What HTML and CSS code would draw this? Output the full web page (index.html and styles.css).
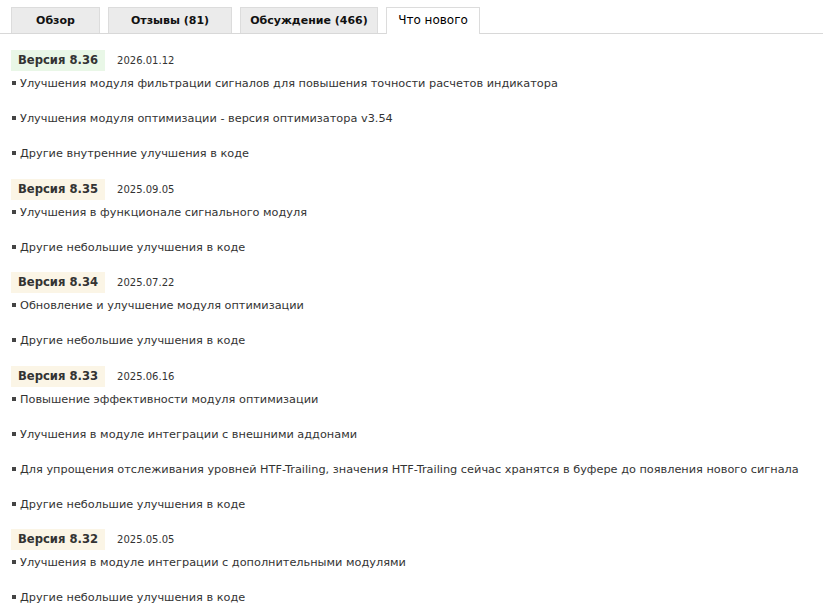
FILE: index.html
```html
<!DOCTYPE html>
<html lang="ru">

<head>
    <meta charset="UTF-8">
    <meta name="viewport" content="width=device-width, initial-scale=1.0">
    <title>Что нового</title>
    <link rel="stylesheet" href="styles.css">
</head>

<body>
    <div class="tabs">
        <div class="tab tab-overview">Обзор</div>
        <div class="tab tab-reviews">Отзывы (81)</div>
        <div class="tab tab-comments">Обсуждение (466)</div>
        <div class="tab tab-news active">Что нового</div>
    </div>

    <div class="changes">
        <div class="release">
            <div class="release-head">
                <span class="version latest">Версия 8.36</span>
                <span class="date">2026.01.12</span>
            </div>
            <ul>
                <li>Улучшения модуля фильтрации сигналов для повышения точности расчетов индикатора</li>
                <li>Улучшения модуля оптимизации - версия оптимизатора v3.54</li>
                <li>Другие внутренние улучшения в коде</li>
            </ul>
        </div>

        <div class="release">
            <div class="release-head">
                <span class="version">Версия 8.35</span>
                <span class="date">2025.09.05</span>
            </div>
            <ul>
                <li>Улучшения в функционале сигнального модуля</li>
                <li>Другие небольшие улучшения в коде</li>
            </ul>
        </div>

        <div class="release">
            <div class="release-head">
                <span class="version">Версия 8.34</span>
                <span class="date">2025.07.22</span>
            </div>
            <ul>
                <li>Обновление и улучшение модуля оптимизации</li>
                <li>Другие небольшие улучшения в коде</li>
            </ul>
        </div>

        <div class="release">
            <div class="release-head">
                <span class="version">Версия 8.33</span>
                <span class="date">2025.06.16</span>
            </div>
            <ul>
                <li>Повышение эффективности модуля оптимизации</li>
                <li>Улучшения в модуле интеграции с внешними аддонами</li>
                <li>Для упрощения отслеживания уровней HTF-Trailing, значения HTF-Trailing сейчас хранятся в буфере до появления нового сигнала</li>
                <li>Другие небольшие улучшения в коде</li>
            </ul>
        </div>

        <div class="release">
            <div class="release-head">
                <span class="version">Версия 8.32</span>
                <span class="date">2025.05.05</span>
            </div>
            <ul>
                <li>Улучшения в модуле интеграции с дополнительными модулями</li>
                <li>Другие небольшие улучшения в коде</li>
            </ul>
        </div>
    </div>
</body>

</html>
```

FILE: styles.css
```css
body {
    margin: 0;
    font-family: "DejaVu Sans", Verdana, sans-serif;
    font-size: 11.3px;
    color: #333;
    background-color: #fff;
}

/* tab strip */
.tabs {
    display: flex;
    gap: 8px;
    padding: 7px 0 0 11px;
    border-bottom: 1px solid #d8d8d8;
}

.tab {
    box-sizing: border-box;
    height: 26px;
    line-height: 25px;
    text-align: center;
    background-color: #ebebeb;
    border: 1px solid #dcdcdc;
    border-bottom: none;
    font-size: 11px;
    font-weight: bold;
    color: #111;
}

.tab-overview { width: 89px; }
.tab-reviews { width: 124px; }
.tab-comments { width: 138px; }
.tab-news { width: 94px; }

.tab.active {
    background-color: #fff;
    font-size: 12px;
    font-weight: normal;
    color: #000;
    height: 27px;
    margin-bottom: -1px;
}

/* changelog */
.changes {
    padding: 16px 11px 0 11px;
}

.release {
    padding-bottom: 1.5px;
}

.release-head {
    display: flex;
    align-items: center;
    gap: 12px;
    height: 21px;
    margin-bottom: 1px;
}

.version {
    box-sizing: border-box;
    height: 21px;
    line-height: 21px;
    padding: 0 7px;
    background-color: #fbf5e6;
    font-size: 11.6px;
    font-weight: bold;
    color: #333;
}

.version.latest {
    background-color: #e9f7e7;
}

.date {
    font-size: 10px;
    color: #333;
}

.release ul {
    list-style: none;
    margin: 0;
    padding: 0;
}

.release li {
    margin: 0 0 12px 1px;
    line-height: 23px;
    white-space: nowrap;
}

.release li::before {
    content: "";
    display: inline-block;
    width: 4px;
    height: 4px;
    margin: 0 4px 2px 0;
    background-color: #444;
    vertical-align: middle;
}
```
